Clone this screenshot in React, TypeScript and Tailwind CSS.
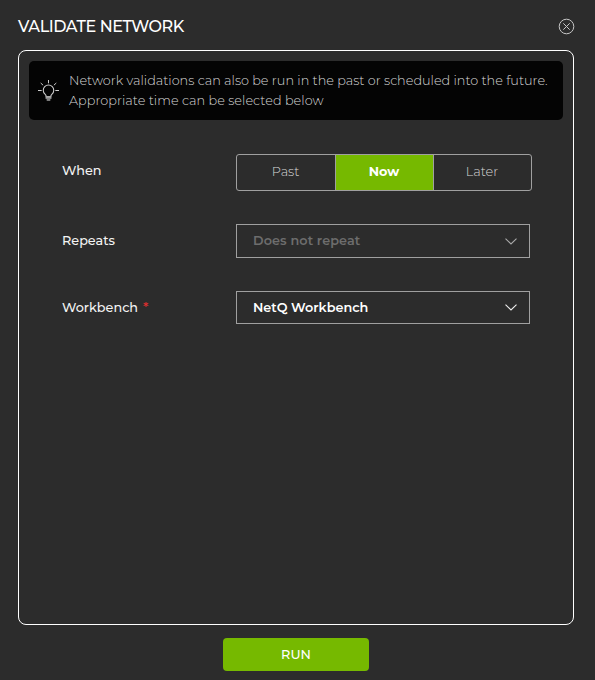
import React from "react";

function Chevron({ color }: { color: string }) {
  return (
    <svg className="shrink-0" width="12" height="7" viewBox="0 0 12 7" fill="none" stroke={color} strokeWidth="1.1">
      <path d="M0.5 0.7 L6 6 L11.5 0.7" />
    </svg>
  );
}

function Bulb() {
  return (
    <svg className="shrink-0" width="22" height="23" viewBox="0 0 22 23" fill="none" stroke="#cccccc" strokeWidth="1">
      <path d="M8.200 17.500c0-1.100-.4-1.600-1.200-2.300a5.250 5.250 0 1 1 7 0c-.8.7-1.200 1.200-1.200 2.300z" strokeWidth="1.100" />
      <path d="M7.800 17.500h5.400v2.200H7.800z" fill="#a0a0a0" stroke="#a0a0a0" strokeWidth="0.500" />
      <path d="M8.700 21h3.600" strokeWidth="1.200" />
      <path d="M10.500 1v3.300M0 11.500h3.700M17.300 11.500H21M2.700 4l2.400 2.200M18.300 4l-2.400 2.200" />
    </svg>
  );
}

function Label({ children }: { children: React.ReactNode }) {
  return <div className="w-[174px] shrink-0 text-[12.8px] font-medium leading-5 text-[#f4f4f4]">{children}</div>;
}

export default function App() {
  return (
    <div className="flex h-[680px] w-[595px] flex-col overflow-hidden whitespace-nowrap bg-[#2c2c2c] font-['Montserrat','Inter',sans-serif] text-white antialiased">
      <header className="flex h-[50px] shrink-0 items-center justify-between pl-[18px] pr-5 pt-[3px]">
        <h1 className="text-[16px] font-medium leading-6 tracking-[-0.44px]">VALIDATE NETWORK</h1>
        <svg width="17" height="17" viewBox="0 0 17 17" fill="none" stroke="#c8c8c8" strokeWidth="1">
          <circle cx="8.500" cy="8.500" r="7.300" />
          <path d="M5.300 5.300l6.400 6.400M11.700 5.300l-6.400 6.400" />
        </svg>
      </header>

      <main className="ml-[18px] h-[575px] w-[556px] shrink-0 rounded-lg border border-white px-2.5 pt-2.5">
        <section className="flex h-[59px] w-[534px] items-center rounded-[5px] bg-[#040404] pl-[9px]">
          <Bulb />
          <p className="ml-[9px] text-[12.8px] font-light leading-5 text-[#d6d6d6]">
            <span className="block">Network validations can also be run in the past or scheduled into the future.</span>
            <span className="block tracking-[0.04px]">Appropriate time can be selected below</span>
          </p>
        </section>

        <div className="flex flex-col pl-[33px] pt-[34px]">
          <div className="flex h-[37px] items-center">
            <Label><span className="block pb-[3px]">When</span></Label>
            <div className="flex h-[37px] w-[296px] overflow-hidden rounded-[3px] border border-[#a0a0a0] text-[12.8px] font-light text-[#d6d6d6]">
              <button className="w-[98px] pb-0.5 pr-px">Past</button>
              <button className="w-[99px] border-x border-[#a0a0a0] bg-[#76b900] pb-0.5 pr-px font-bold text-white">Now</button>
              <button className="flex-1 pb-0.5 pr-px">Later</button>
            </div>
          </div>
          <div className="mt-[33px] flex h-[34px] items-center">
            <Label>Repeats</Label>
            <div className="flex h-[34px] w-[294px] items-center justify-between border border-[#a0a0a0] pl-4 pr-3 text-[12.8px] font-semibold text-[#6d6d6d]">
              <span className="tracking-[0.1px]">Does not repeat</span><Chevron color="#aaaaaa" />
            </div>
          </div>
          <div className="mt-[33px] flex h-[33px] items-center">
            <Label>Workbench<span className="ml-[5px] inline-block pt-px text-[13.5px] leading-none text-[#e02f2f]">*</span></Label>
            <div className="flex h-[33px] w-[294px] items-center justify-between border border-[#a0a0a0] pl-4 pr-3 text-[12.8px] font-semibold text-white">
              <span>NetQ Workbench</span><Chevron color="#eeeeee" />
            </div>
          </div>
        </div>
      </main>

      <button className="ml-[223px] mt-[13px] h-[33px] w-[146px] shrink-0 rounded-sm bg-[#76b900] text-[12.8px] font-medium">RUN</button>
    </div>
  );
}
